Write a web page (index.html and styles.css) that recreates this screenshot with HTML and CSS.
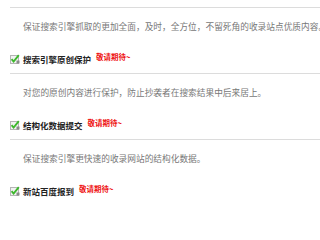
FILE: index.html
```html
<!DOCTYPE html>
<html lang="zh-CN">
<head>
<meta charset="utf-8">
<title>功能列表</title>
<link rel="stylesheet" href="styles.css">
</head>
<body>
<div class="list">
  <div class="rule"></div>
  <p class="desc">保证搜索引擎抓取的更加全面，及时，全方位，不留死角的收录站点优质内容。</p>
  <div class="title">
    <svg class="check" viewBox="0 0 10 10" width="10" height="10"><rect x="0.5" y="1.5" width="8" height="8" fill="#f2f2f2" stroke="#b5b5b5"/><path d="M1.6 5.2 L3.6 7.6 L8.8 1.2" fill="none" stroke="#3cb82c" stroke-width="1.9"/><rect x="6.5" y="6.5" width="3" height="3" fill="#8a8a8a"/></svg>
    <span class="name">搜索引擎原创保护</span>
    <span class="soon">敬请期待~</span>
  </div>
  <div class="rule"></div>
  <p class="desc">对您的原创内容进行保护，防止抄袭者在搜索结果中后来居上。</p>
  <div class="title">
    <svg class="check" viewBox="0 0 10 10" width="10" height="10"><rect x="0.5" y="1.5" width="8" height="8" fill="#f2f2f2" stroke="#b5b5b5"/><path d="M1.6 5.2 L3.6 7.6 L8.8 1.2" fill="none" stroke="#3cb82c" stroke-width="1.9"/><rect x="6.5" y="6.5" width="3" height="3" fill="#8a8a8a"/></svg>
    <span class="name">结构化数据提交</span>
    <span class="soon">敬请期待~</span>
  </div>
  <div class="rule"></div>
  <p class="desc">保证搜索引擎更快速的收录网站的结构化数据。</p>
  <div class="title">
    <svg class="check" viewBox="0 0 10 10" width="10" height="10"><rect x="0.5" y="1.5" width="8" height="8" fill="#f2f2f2" stroke="#b5b5b5"/><path d="M1.6 5.2 L3.6 7.6 L8.8 1.2" fill="none" stroke="#3cb82c" stroke-width="1.9"/><rect x="6.5" y="6.5" width="3" height="3" fill="#8a8a8a"/></svg>
    <span class="name">新站百度报到</span>
    <span class="soon">敬请期待~</span>
  </div>
</div>
</body>
</html>
```
FILE: styles.css
```css
html, body {
  margin: 0;
  padding: 0;
  background: #fff;
  overflow: hidden;
}
body {
  font-family: "Noto Sans CJK SC", "Noto Sans", sans-serif;
}
.list {
  padding: 7px 0 0 10px;
  overflow: hidden;
}
.rule {
  height: 1px;
  background: #dcdcdc;
}
.desc {
  margin: 0;
  padding-left: 13px;
  height: 38px;
  line-height: 38px;
  font-size: 8.7px;
  color: #777;
  white-space: nowrap;
  overflow: hidden;
}
.title {
  display: flex;
  align-items: center;
  height: 26px;
  padding-bottom: 1px;
}
.check {
  flex: none;
  margin-right: 3px;
}
.name {
  font-size: 8.5px;
  color: #222;
  font-weight: 600;
}
.soon {
  margin-left: 5px;
  font-size: 7.5px;
  font-weight: 700;
  color: #ee1111;
  position: relative;
  top: -3px;
}
```
